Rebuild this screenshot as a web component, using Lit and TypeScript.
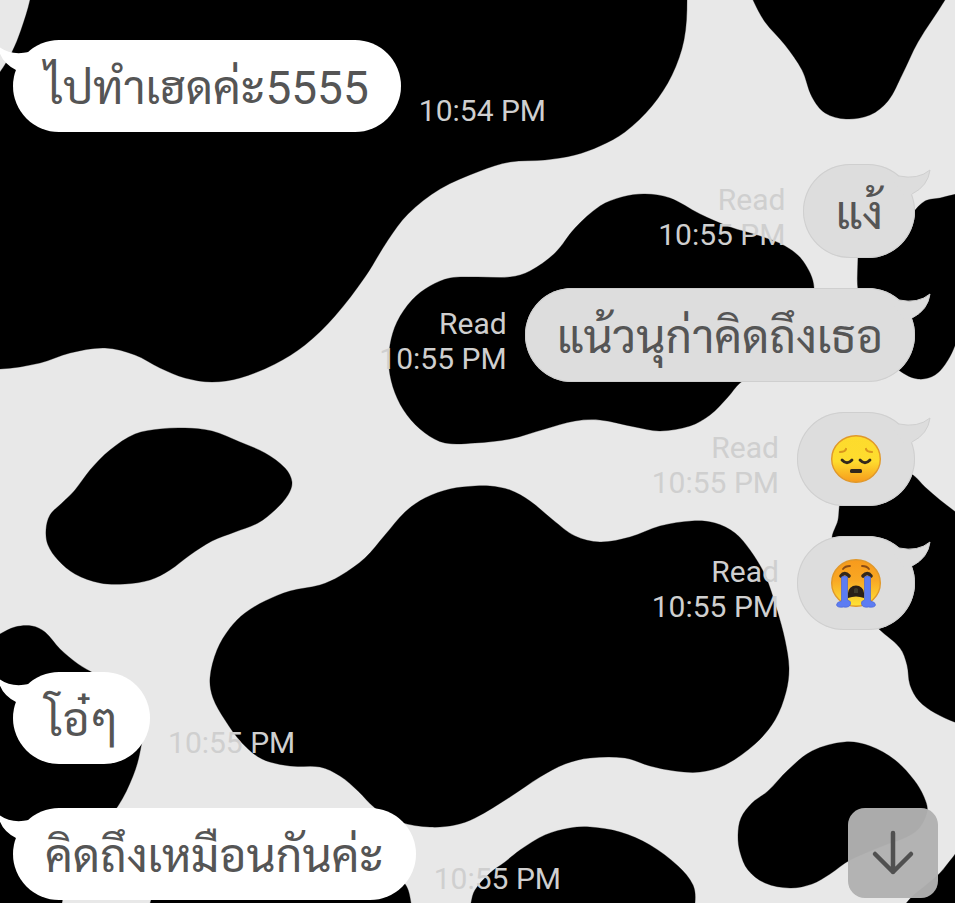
import { LitElement, html, css, svg, nothing } from "lit";
import { customElement, property } from "lit/decorators.js";

type Point = [number, number];

interface Message {
  from: "me" | "them";
  time: string;
  text?: string;
  emoji?: "pensive" | "sob";
}

const MESSAGES: Message[] = [
  { from: "them", time: "10:54 PM", text: "ไปทำเฮดค่ะ5555" },
  { from: "me", time: "10:55 PM", text: "แง้" },
  { from: "me", time: "10:55 PM", text: "แน้วนุก่าคิดถึงเธอ" },
  { from: "me", time: "10:55 PM", emoji: "pensive" },
  { from: "me", time: "10:55 PM", emoji: "sob" },
  { from: "them", time: "10:55 PM", text: "โอ๋ๆ" },
  { from: "them", time: "10:55 PM", text: "คิดถึงเหมือนกันค่ะ" },
];

// Outline points of each cow patch, joined by a smooth closed curve.
const PATCHES: Point[][] = [
  [[32, -20], [30, 0], [21, 30], [12, 52], [0, 72], [-30, 110], [-40, 240], [-30, 366], [0, 369], [40, 363], [70, 353], [105, 348], [135, 355], [160, 368], [185, 378], [212, 382], [240, 378], [275, 364], [305, 345], [335, 316], [365, 277], [388, 240], [408, 214], [440, 189], [480, 171], [510, 162], [545, 160], [575, 155], [600, 146], [625, 132], [652, 106], [672, 75], [684, 40], [687, 0], [684, -20]],
  [[745, -20], [753, 0], [765, 22], [785, 45], [802, 70], [812, 97], [825, 113], [846, 119], [870, 115], [888, 101], [902, 75], [918, 42], [945, 0], [955, -20]],
  [[475, 277], [510, 277], [530, 271], [555, 253], [575, 228], [600, 206], [622, 197], [645, 194], [670, 198], [700, 214], [730, 227], [760, 236], [785, 246], [803, 261], [814, 288], [805, 330], [770, 362], [740, 383], [728, 397], [710, 415], [690, 426], [660, 431], [635, 427], [600, 420], [575, 421], [545, 429], [510, 439], [475, 443], [445, 443], [425, 433], [407, 415], [395, 393], [389, 368], [390, 345], [397, 322], [412, 300], [430, 286], [450, 278]],
  [[858, 225], [858, 256], [858, 290], [870, 345], [900, 371], [918, 379], [935, 375], [948, 360], [957, 340], [980, 270], [975, 192], [957, 194], [940, 198], [925, 201], [913, 213], [900, 235], [880, 235]],
  [[46, 530], [50, 515], [62, 503], [75, 490], [90, 470], [110, 450], [135, 434], [160, 429], [185, 428], [212, 431], [240, 442], [265, 453], [285, 468], [292, 482], [288, 495], [275, 510], [258, 523], [235, 532], [212, 541], [190, 555], [170, 570], [150, 580], [125, 584], [100, 583], [75, 574], [58, 560], [48, 545]],
  [[475, 486], [450, 489], [425, 498], [405, 512], [385, 535], [365, 558], [340, 576], [320, 585], [290, 591], [265, 601], [245, 613], [230, 628], [217, 650], [210, 678], [213, 698], [225, 720], [242, 743], [262, 759], [290, 766], [320, 767], [340, 776], [358, 791], [375, 808], [400, 822], [430, 827], [455, 825], [475, 818], [510, 797], [540, 777], [565, 764], [590, 758], [625, 758], [650, 766], [675, 771], [700, 772], [725, 765], [755, 744], [775, 720], [786, 692], [789, 668], [785, 640], [777, 610], [765, 575], [750, 550], [735, 533], [715, 523], [692, 521], [660, 526], [630, 537], [600, 542], [575, 536], [553, 520], [530, 501], [510, 490], [490, 486]],
  [[-20, 645], [0, 634], [15, 627], [32, 626], [45, 632], [60, 649], [78, 664], [95, 674], [130, 695], [143, 722], [140, 752], [133, 776], [118, 806], [90, 840], [67, 880], [62, 903], [60, 925], [-20, 925], [-30, 780]],
  [[150, 925], [151, 900], [160, 880], [200, 860], [300, 850], [380, 862], [405, 884], [411, 903], [412, 925]],
  [[468, 925], [471, 903], [475, 890], [490, 873], [505, 862], [520, 850], [545, 835], [570, 828], [590, 827], [620, 832], [650, 845], [678, 866], [693, 885], [695, 903], [690, 925]],
  [[738, 835], [741, 818], [752, 803], [768, 791], [788, 770], [812, 751], [845, 742], [870, 746], [895, 760], [914, 780], [924, 797], [927, 812], [915, 832], [880, 847], [850, 860], [830, 874], [812, 884], [790, 888], [765, 883], [748, 870], [740, 852]],
  [[960, 850], [953, 857], [940, 873], [925, 886], [908, 901], [895, 925], [975, 925]],
  [[840, 503], [838, 520], [832, 540], [845, 595], [880, 630], [900, 648], [907, 665], [910, 685], [919, 701], [935, 713], [957, 723], [980, 730], [990, 620], [980, 530], [957, 513], [940, 500], [925, 487], [913, 475], [885, 460], [850, 475]],
];

// Tangents follow the neighbouring points; each handle is a third of its own
// segment, so unevenly spaced points still give an even curve.
function smooth(points: Point[]): string {
  const n = points.length;
  const at = (i: number) => points[(i + n) % n];
  const tangent = (i: number): Point => {
    const dx = at(i + 1)[0] - at(i - 1)[0];
    const dy = at(i + 1)[1] - at(i - 1)[1];
    const length = Math.hypot(dx, dy);
    return [dx / length, dy / length];
  };
  let d = `M${points[0][0]} ${points[0][1]}`;
  for (let i = 0; i < n; i++) {
    const [b, c] = [at(i), at(i + 1)];
    const [s, t] = [tangent(i), tangent(i + 1)];
    const h = Math.hypot(c[0] - b[0], c[1] - b[1]) / 3;
    d += `C${b[0] + s[0] * h} ${b[1] + s[1] * h} ${c[0] - t[0] * h} ${c[1] - t[1] * h} ${c[0]} ${c[1]}`;
  }
  return d + "Z";
}

@customElement("cow-wallpaper")
export class CowWallpaper extends LitElement {
  static styles = css`
    :host {
      display: block;
    }
    .art {
      display: block;
      width: 100%;
      height: 100%;
    }
  `;

  render() {
    return html`<svg class="art" viewBox="0 0 955 903" preserveAspectRatio="xMidYMid slice" aria-hidden="true">
      ${PATCHES.map((p) => svg`<path d=${smooth(p)} fill="#000" stroke="#000" stroke-opacity="0.3" />`)}
    </svg>`;
  }
}

@customElement("chat-emoji")
export class ChatEmoji extends LitElement {
  @property() name: "pensive" | "sob" = "pensive";

  static styles = css`
    :host {
      display: block;
    }
    .face {
      display: block;
      width: 54px;
      height: 54px;
    }
  `;

  private pensive() {
    return html`<svg class="face" viewBox="-27 -27 54 54" role="img" aria-label="Pensive face">
      <defs>
        <linearGradient id="skin" x1="0" y1="0" x2="0" y2="1">
          <stop offset="0" stop-color="#fddb2c" />
          <stop offset="0.55" stop-color="#fedc2e" />
          <stop offset="1" stop-color="#f79a1c" />
        </linearGradient>
      </defs>
      <ellipse cx="0" cy="0" rx="24.300" ry="23.300" fill="url(#skin)" stroke="#e0982a" stroke-width="1.4" />
      <path d="M-16-7q5 0 6-3M16-7q-5 0-6-3" fill="none" stroke="#d9951c" stroke-width="2.2" stroke-linecap="round" />
      <path d="M-14 1q5 5.500 10 0M4 1q5 5.500 10 0" fill="none" stroke="#33281c" stroke-width="2.8" stroke-linecap="round" />
      <rect x="-6" y="10" width="12" height="4" rx="1.5" fill="#33281c" />
    </svg>`;
  }

  private sob() {
    return html`<svg class="face" viewBox="-27 -27 54 54" role="img" aria-label="Loudly crying face">
      <defs>
        <linearGradient id="skin" x1="0" y1="0" x2="0" y2="1">
          <stop offset="0" stop-color="#f79a1c" />
          <stop offset="0.45" stop-color="#f9a824" />
          <stop offset="1" stop-color="#fee436" />
        </linearGradient>
      </defs>
      <ellipse cx="0" cy="0" rx="24.300" ry="23.300" fill="url(#skin)" stroke="#e0982a" stroke-width="1.4" />
      <path d="M-13-14q2-3 7-3M13-14q-2-3-7-3" fill="none" stroke="#8a4c16" stroke-width="1.8" stroke-linecap="round" />
      <path d="M-15-7q3.500-5 8 0M7-7q4.500-5 8 0" fill="none" stroke="#33281c" stroke-width="3.600" stroke-linecap="round" />
      <path d="M-8 15V10a8 7.500 0 0 1 16 0v5q-8-3-16 0Z" fill="#2a2018" />
      <path d="M-2 10V6q2-2 4 0v4Z" fill="#403c2c" />
      <path d="M-14.500-6q3-2 6 0V17q4 1 3 4-1 4-7 3-6 1-7-2 0-3 5-4ZM14.500-6q-3-2-6 0V17q-4 1-3 4 1 4 7 3 6 1 7-2 0-3-5-4Z" fill="#5c7cf2" stroke="#4a66d4" stroke-width="0.7" />
    </svg>`;
  }

  render() {
    return this.name === "sob" ? this.sob() : this.pensive();
  }
}

@customElement("chat-message")
export class ChatMessage extends LitElement {
  @property({ attribute: false }) message!: Message;

  static styles = css`
    :host {
      display: block;
    }
    .row {
      display: flex;
      align-items: flex-end;
      gap: 18px;
    }
    .them {
      padding: 12px 0 2px 13px;
    }
    .me {
      flex-direction: row-reverse;
      padding-right: 40px;
    }
    .bubble {
      position: relative;
      box-sizing: border-box;
      display: flex;
      align-items: center;
      height: 92px;
      padding: 0 32px;
      border-radius: 46px;
      background: #fff;
      color: #555;
      font-size: 46px;
      line-height: 60px;
      white-space: nowrap;
    }
    .me .bubble {
      height: 94px;
      border-radius: 47px;
      background: #ddd;
      box-shadow: inset 0 0 0 1px #cfcfcf;
    }
    .text {
      margin: 0;
      padding-top: 4px;
    }
    .tail {
      position: absolute;
      top: 4px;
      right: -17px;
      width: 40px;
      height: 32px;
    }
    .them .tail {
      right: auto;
      left: -17px;
      transform: scaleX(-1);
    }
    .meta {
      display: flex;
      flex-direction: column;
      padding-bottom: 4px;
      color: #cfcfcf;
      font-size: 30px;
      line-height: 35px;
      white-space: nowrap;
    }
    .me .meta {
      align-items: flex-end;
      padding-bottom: 6px;
    }
  `;

  render() {
    const m = this.message;
    const mine = m.from === "me";
    return html`<div class="row ${m.from}">
      <div class="bubble">
        <svg class="tail" viewBox="0 0 40 32" aria-hidden="true">
          <path d="M2 14 7 8Q26 12 38 2Q36 18 20 26L14 30Z" fill=${mine ? "#ddd" : "#fff"} />
          ${mine ? svg`<path d="M7 8Q26 12 38 2Q36 18 20 26" fill="none" stroke="#cfcfcf" />` : nothing}
        </svg>
        ${m.emoji ? html`<chat-emoji name=${m.emoji}></chat-emoji>` : html`<p class="text">${m.text}</p>`}
      </div>
      <div class="meta">
        ${mine ? html`<span>Read</span>` : nothing}
        <time>${m.time}</time>
      </div>
    </div>`;
  }
}

@customElement("app-root")
export class AppRoot extends LitElement {
  static styles = css`
    :host {
      display: block;
      position: relative;
      box-sizing: border-box;
      min-height: 100vh;
      overflow: hidden;
      background: #e8e8e8;
      font-family: Roboto, Sarabun, Loma, Waree, sans-serif;
    }
    .wallpaper {
      position: absolute;
      inset: 0;
    }
    .thread {
      position: relative;
      display: flex;
      flex-direction: column;
      gap: 30px;
      margin: 0;
      padding: 28px 0 0;
      list-style: none;
    }
    .latest {
      position: absolute;
      right: 17px;
      bottom: 5px;
      display: grid;
      place-items: center;
      width: 90px;
      height: 90px;
      padding: 0;
      border: 0;
      border-radius: 17px;
      background: rgba(177, 177, 177, 0.97);
      color: #505050;
    }
    .arrow {
      width: 44px;
      height: 46px;
    }
  `;

  render() {
    return html`
      <cow-wallpaper class="wallpaper"></cow-wallpaper>
      <ol class="thread">
        ${MESSAGES.map((m) => html`<li><chat-message .message=${m}></chat-message></li>`)}
      </ol>
      <button class="latest" type="button" aria-label="Scroll to latest message">
        <svg class="arrow" viewBox="0 0 44 46" fill="none" stroke="currentColor" stroke-width="4.500" stroke-linecap="round" stroke-linejoin="round" aria-hidden="true">
          <path d="M22 3V42M4 24 22 42 40 24" />
        </svg>
      </button>
    `;
  }
}
